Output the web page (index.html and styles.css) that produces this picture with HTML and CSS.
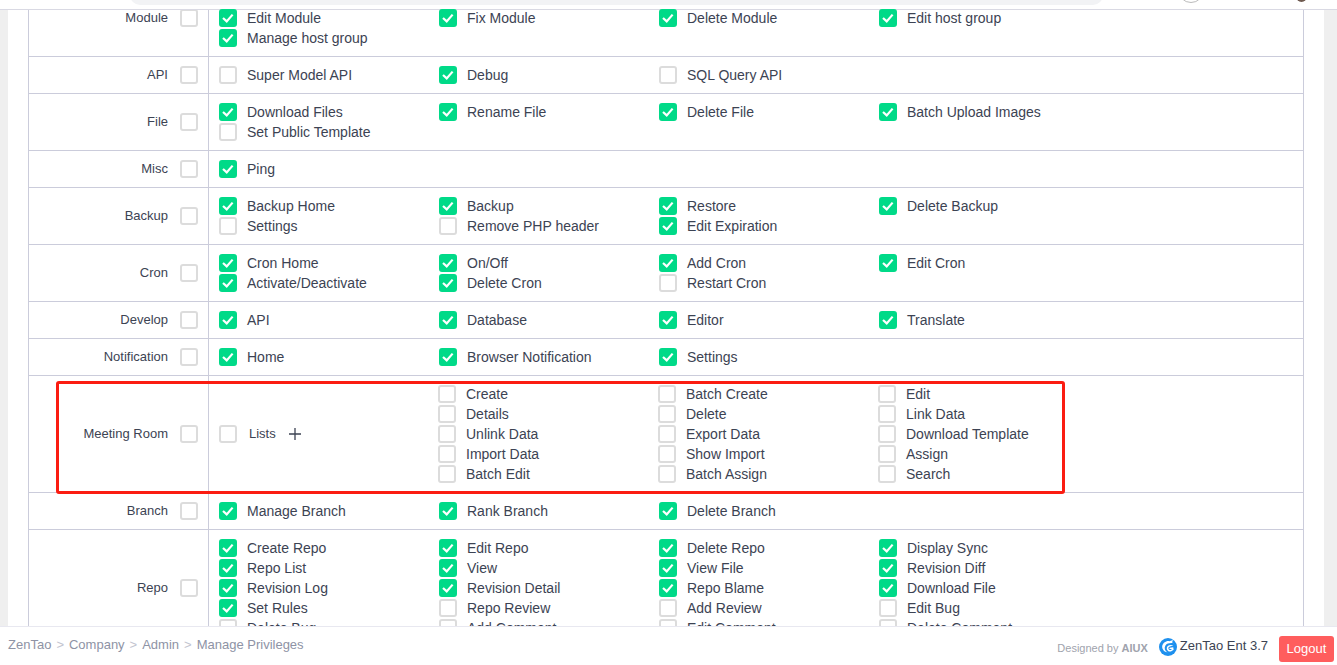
FILE: index.html
```html
<!DOCTYPE html>
<html lang="en">
<head>
<meta charset="utf-8">
<title>Manage Privileges</title>
<link rel="stylesheet" href="styles.css">
</head>
<body>
<header class="topbar"><div class="searchbar"></div><div class="circle"></div><div class="avatar"></div></header>
<main class="card">
<div class="table" id="table"></div>
</main>
<div class="highlight"></div>
<footer class="footer">
  <nav class="crumbs"><span>ZenTao</span><i>&gt;</i><span>Company</span><i>&gt;</i><span>Admin</span><i>&gt;</i><span>Manage Privileges</span></nav>
  <div class="foot-right">
    <span class="designed">Designed by <b>AIUX</b></span>
    <svg class="logo" viewBox="0 0 20 20" width="18" height="18"><circle cx="10" cy="10" r="10" fill="#1e90ee"/><path d="M3.500 9.500C4 5.500 8 2.800 11.500 3.500L15.500 2.200 14.500 5 17 6C13.500 5.400 9 5.400 7 8.600 5.600 11 6.500 14.500 9.500 16 6 15.500 3.500 13 3.500 9.500Z" fill="#fff"/><path d="M16 8.500C12.800 7 9 8.200 8.600 11 8.300 13.600 10.800 15.600 13.300 15L16.300 13 15.800 10.400 11.800 10.800 11.500 12.200 13.900 12.100 13.900 13C12.500 14 10.300 13.300 10.400 11.200 10.600 9.300 13 8.800 16 8.500Z" fill="#fff"/></svg>
    <span class="version">ZenTao Ent 3.7</span>
    <button class="logout">Logout</button>
  </div>
</footer>
<script src="app.js"></script>
</body>
</html>
```
FILE: styles.css
```css
* { box-sizing: border-box; }
html, body { margin: 0; height: 100%; }
body {
  height: 665px;
  overflow: hidden;
  background: #efefef;
  font-family: "Liberation Sans", Arial, sans-serif;
  font-size: 14px;
  line-height: 20px;
  color: #3c4353;
  padding-left: 8px;
}
.card { width: 1316px; background: #fff; padding: 0 20px; height: 665px; overflow: hidden; }
.table { width: 1276px; border-left: 1px solid #cbccdb; border-right: 1px solid #cbccdb; }
.row { display: flex; border-bottom: 1px solid #cbccdb; }
.head {
  width: 180px; flex: none; border-right: 1px solid #cbccdb;
  display: flex; align-items: center; justify-content: flex-end;
  padding-right: 10px; gap: 12px; font-size: 13px;
}
.head.top { align-items: flex-start; padding-top: 8px; }
.head.top .box { margin-top: 1px; }
.body { padding: 8px 0 8px 10px; flex: 1; display: flex; align-items: center; }
.grid { display: grid; grid-template-columns: repeat(4, 220px); width: 880px; }
.item { display: flex; align-items: center; height: 20px; gap: 10px; white-space: nowrap; }
.box {
  width: 18px; height: 18px; flex: none; border: 2px solid #dcdcdc; border-radius: 3px; background: #fff;
  display: block;
}
.box.on { background: #00da88; border-color: #00da88; position: relative; }
.box.on svg { display: block; width: 14px; height: 14px; }
.lists { width: 219px; flex: none; display: flex; align-items: center; font-size: 13px; }
.lists .label { margin-left: 12px; }
.plus { margin: -1px 0 0 13px; width: 12px; height: 12px; display: block; }
.sub .grid { grid-template-columns: repeat(3, 220px); width: 660px; }

.topbar { position: absolute; left: 0; top: 0; width: 1337px; height: 10px; background: #fff; border-bottom: 1px solid #d9d9e3; overflow: hidden; }
.searchbar { position: absolute; left: 130px; top: -20px; width: 973px; height: 25px; background: #f2f3f5; border-radius: 0 0 10px 10px; }
.circle { position: absolute; left: 1178px; top: -23px; width: 26px; height: 26px; border-radius: 50%; background: #fff; border: 1px solid #bbb; }
.avatar { position: absolute; left: 1296px; top: -10px; width: 11px; height: 12px; border-radius: 50%; background: #6f5a50; }
.highlight { position: absolute; left: 56px; top: 381px; width: 1009px; height: 113px; border: 3px solid #fb1c11; border-radius: 3px; }

.footer {
  position: absolute; left: 0; top: 626px; width: 1337px; height: 39px; background: #fff;
  border-top: 1px solid #e8e8f0; display: flex; justify-content: space-between; align-items: center;
  padding: 0 3px 0 8px;
}
.crumbs { color: #8e93a5; font-size: 13px; display: flex; gap: 5px; margin-top: -2px; }
.crumbs i { font-style: normal; color: #c2c4cf; }
.foot-right { display: flex; align-items: center; margin-top: 5px; }
.designed { font-size: 11px; color: #a0a3ad; margin-top: -2px; }
.designed b { font-weight: 700; }
.logo { margin-left: 11px; margin-top: -4px; }
.version { font-size: 13px; color: #3c4353; margin-left: 3px; margin-top: -5px; }
.logout {
  margin-left: 11px; width: 55px; height: 26px; border: 0; border-radius: 3px; background: #ff5d5d; color: #fff;
  font: 13px "Liberation Sans", Arial, sans-serif; padding: 0;
}
```
FILE: app.js
```js
const rows = [
  ["Module", [["Edit Module",1],["Fix Module",1],["Delete Module",1],["Edit host group",1],["Manage host group",1]]],
  ["API", [["Super Model API",0],["Debug",1],["SQL Query API",0]]],
  ["File", [["Download Files",1],["Rename File",1],["Delete File",1],["Batch Upload Images",1],["Set Public Template",0]]],
  ["Misc", [["Ping",1]]],
  ["Backup", [["Backup Home",1],["Backup",1],["Restore",1],["Delete Backup",1],["Settings",0],["Remove PHP header",0],["Edit Expiration",1]]],
  ["Cron", [["Cron Home",1],["On/Off",1],["Add Cron",1],["Edit Cron",1],["Activate/Deactivate",1],["Delete Cron",1],["Restart Cron",0]]],
  ["Develop", [["API",1],["Database",1],["Editor",1],["Translate",1]]],
  ["Notification", [["Home",1],["Browser Notification",1],["Settings",1]]],
  ["Meeting Room", null, ["Create","Batch Create","Edit","Details","Delete","Link Data","Unlink Data","Export Data","Download Template","Import Data","Show Import","Assign","Batch Edit","Batch Assign","Search"]],
  ["Branch", [["Manage Branch",1],["Rank Branch",1],["Delete Branch",1]]],
  ["Repo", [["Create Repo",1],["Edit Repo",1],["Delete Repo",1],["Display Sync",1],["Repo List",1],["View",1],["View File",1],["Revision Diff",1],["Revision Log",1],["Revision Detail",1],["Repo Blame",1],["Download File",1],["Set Rules",1],["Repo Review",0],["Add Review",0],["Edit Bug",0],["Delete Bug",0],["Add Comment",0],["Edit Comment",0],["Delete Comment",0]]]
];
const check = '<svg viewBox="0 0 14 14"><path d="M2 7 5.700 10.400 11.600 3.600" fill="none" stroke="#fff" stroke-width="2.200"/></svg>';
const box = on => `<span class="box${on ? " on" : ""}">${on ? check : ""}</span>`;
const item = (t, on) => `<div class="item">${box(on)}<span>${t}</span></div>`;
document.getElementById("table").innerHTML = rows.map(([name, items, sub], i) => {
  const head = `<div class="head${i === 0 ? " top" : ""}"><span>${name}</span>${box(0)}</div>`;
  const body = sub
    ? `<div class="body sub"><div class="lists">${box(0)}<span class="label">Lists</span><svg class="plus" viewBox="0 0 12 12"><path d="M6 0V12M0 6H12" stroke="#3c4353" stroke-width="1.300"/></svg></div><div class="grid">${sub.map(t => item(t, 0)).join("")}</div></div>`
    : `<div class="body"><div class="grid">${items.map(([t, on]) => item(t, on)).join("")}</div></div>`;
  return `<div class="row">${head}${body}</div>`;
}).join("");
```
